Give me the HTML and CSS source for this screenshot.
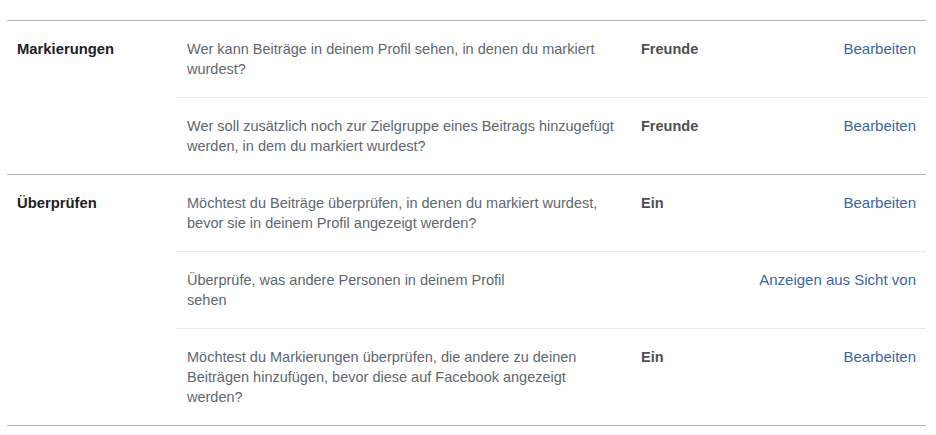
FILE: index.html
```html
<!DOCTYPE html>
<html lang="de">
<head>
<meta charset="utf-8">
<title>Chronik und Markierungen</title>
<link rel="stylesheet" href="styles.css">
</head>
<body>
<div class="settings">
  <section class="group">
    <h3 class="group-label">Markierungen</h3>
    <div class="rows">
      <div class="row">
        <div class="desc">Wer kann Beiträge in deinem Profil sehen, in denen du markiert wurdest?</div>
        <div class="value">Freunde</div>
        <a class="action" href="#">Bearbeiten</a>
      </div>
      <div class="row">
        <div class="desc">Wer soll zusätzlich noch zur Zielgruppe eines Beitrags hinzugefügt werden, in dem du markiert wurdest?</div>
        <div class="value">Freunde</div>
        <a class="action" href="#">Bearbeiten</a>
      </div>
    </div>
  </section>
  <section class="group">
    <h3 class="group-label">Überprüfen</h3>
    <div class="rows">
      <div class="row">
        <div class="desc">Möchtest du Beiträge überprüfen, in denen du markiert wurdest, bevor sie in deinem Profil angezeigt werden?</div>
        <div class="value">Ein</div>
        <a class="action" href="#">Bearbeiten</a>
      </div>
      <div class="row">
        <div class="desc desc-narrow">Überprüfe, was andere Personen in deinem Profil sehen</div>
        <div class="value"></div>
        <a class="action" href="#">Anzeigen aus Sicht von</a>
      </div>
      <div class="row">
        <div class="desc">Möchtest du Markierungen überprüfen, die andere zu deinen Beiträgen hinzufügen, bevor diese auf Facebook angezeigt werden?</div>
        <div class="value">Ein</div>
        <a class="action" href="#">Bearbeiten</a>
      </div>
    </div>
  </section>
</div>
</body>
</html>
```

FILE: styles.css
```css
html, body {
  margin: 0;
  padding: 0;
  background: #ffffff;
}

body {
  font-family: "Liberation Sans", Arial, Helvetica, sans-serif;
  font-size: 14px;
  line-height: 20px;
  color: #4b4f56;
}

.settings {
  margin: 20px 0 0 7px;
  width: 919px;
  border-bottom: 1px solid #b4b6b9;
}

.group {
  display: flex;
  border-top: 1px solid #b4b6b9;
}

.group-label {
  width: 159px;
  flex: none;
  margin: 0;
  padding: 18px 0 0 10px;
  font-size: 14.8px;
  font-weight: bold;
  line-height: 20px;
  color: #1d2129;
}

.rows {
  flex: 1;
}

.row {
  display: grid;
  grid-template-columns: 454px 1fr auto;
  padding: 18px 10px 18px 11px;
}

.row + .row {
  border-top: 1px solid #e9ebee;
}

.desc {
  width: 429px;
  font-size: 14.5px;
  color: #606770;
}

.desc-narrow {
  width: 340px;
}

.value {
  font-size: 14.5px;
  font-weight: bold;
  color: #4b4f56;
}

.action {
  font-size: 15px;
  color: #3b65a5;
  text-decoration: none;
  text-align: right;
}
```
